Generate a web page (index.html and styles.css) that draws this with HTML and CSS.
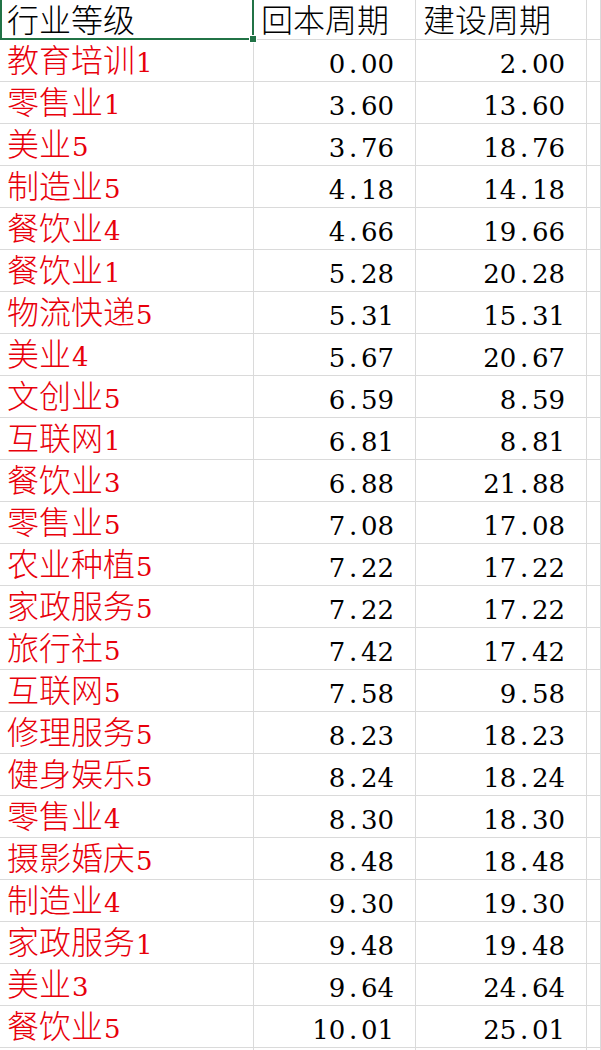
FILE: index.html
```html
<!DOCTYPE html>
<html>
<head>
<meta charset="utf-8">
<title>回本周期</title>
<link rel="stylesheet" href="styles.css">
</head>
<body>
<div class="sheet">
  <div class="row head">
    <div class="cell c1 selected">行业等级<span class="handle"></span></div>
    <div class="cell c2 txt">回本周期</div>
    <div class="cell c3 txt">建设周期</div>
    <div class="cell c4"></div>
  </div>
  <div class="row"><div class="cell c1 red">教育培训<span class="n">1</span></div><div class="cell c2 num">0<span class="dot">.</span>00</div><div class="cell c3 num">2<span class="dot">.</span>00</div><div class="cell c4"></div></div>
  <div class="row"><div class="cell c1 red">零售业<span class="n">1</span></div><div class="cell c2 num">3<span class="dot">.</span>60</div><div class="cell c3 num">13<span class="dot">.</span>60</div><div class="cell c4"></div></div>
  <div class="row"><div class="cell c1 red">美业<span class="n">5</span></div><div class="cell c2 num">3<span class="dot">.</span>76</div><div class="cell c3 num">18<span class="dot">.</span>76</div><div class="cell c4"></div></div>
  <div class="row"><div class="cell c1 red">制造业<span class="n">5</span></div><div class="cell c2 num">4<span class="dot">.</span>18</div><div class="cell c3 num">14<span class="dot">.</span>18</div><div class="cell c4"></div></div>
  <div class="row"><div class="cell c1 red">餐饮业<span class="n">4</span></div><div class="cell c2 num">4<span class="dot">.</span>66</div><div class="cell c3 num">19<span class="dot">.</span>66</div><div class="cell c4"></div></div>
  <div class="row"><div class="cell c1 red">餐饮业<span class="n">1</span></div><div class="cell c2 num">5<span class="dot">.</span>28</div><div class="cell c3 num">20<span class="dot">.</span>28</div><div class="cell c4"></div></div>
  <div class="row"><div class="cell c1 red">物流快递<span class="n">5</span></div><div class="cell c2 num">5<span class="dot">.</span>31</div><div class="cell c3 num">15<span class="dot">.</span>31</div><div class="cell c4"></div></div>
  <div class="row"><div class="cell c1 red">美业<span class="n">4</span></div><div class="cell c2 num">5<span class="dot">.</span>67</div><div class="cell c3 num">20<span class="dot">.</span>67</div><div class="cell c4"></div></div>
  <div class="row"><div class="cell c1 red">文创业<span class="n">5</span></div><div class="cell c2 num">6<span class="dot">.</span>59</div><div class="cell c3 num">8<span class="dot">.</span>59</div><div class="cell c4"></div></div>
  <div class="row"><div class="cell c1 red">互联网<span class="n">1</span></div><div class="cell c2 num">6<span class="dot">.</span>81</div><div class="cell c3 num">8<span class="dot">.</span>81</div><div class="cell c4"></div></div>
  <div class="row"><div class="cell c1 red">餐饮业<span class="n">3</span></div><div class="cell c2 num">6<span class="dot">.</span>88</div><div class="cell c3 num">21<span class="dot">.</span>88</div><div class="cell c4"></div></div>
  <div class="row"><div class="cell c1 red">零售业<span class="n">5</span></div><div class="cell c2 num">7<span class="dot">.</span>08</div><div class="cell c3 num">17<span class="dot">.</span>08</div><div class="cell c4"></div></div>
  <div class="row"><div class="cell c1 red">农业种植<span class="n">5</span></div><div class="cell c2 num">7<span class="dot">.</span>22</div><div class="cell c3 num">17<span class="dot">.</span>22</div><div class="cell c4"></div></div>
  <div class="row"><div class="cell c1 red">家政服务<span class="n">5</span></div><div class="cell c2 num">7<span class="dot">.</span>22</div><div class="cell c3 num">17<span class="dot">.</span>22</div><div class="cell c4"></div></div>
  <div class="row"><div class="cell c1 red">旅行社<span class="n">5</span></div><div class="cell c2 num">7<span class="dot">.</span>42</div><div class="cell c3 num">17<span class="dot">.</span>42</div><div class="cell c4"></div></div>
  <div class="row"><div class="cell c1 red">互联网<span class="n">5</span></div><div class="cell c2 num">7<span class="dot">.</span>58</div><div class="cell c3 num">9<span class="dot">.</span>58</div><div class="cell c4"></div></div>
  <div class="row"><div class="cell c1 red">修理服务<span class="n">5</span></div><div class="cell c2 num">8<span class="dot">.</span>23</div><div class="cell c3 num">18<span class="dot">.</span>23</div><div class="cell c4"></div></div>
  <div class="row"><div class="cell c1 red">健身娱乐<span class="n">5</span></div><div class="cell c2 num">8<span class="dot">.</span>24</div><div class="cell c3 num">18<span class="dot">.</span>24</div><div class="cell c4"></div></div>
  <div class="row"><div class="cell c1 red">零售业<span class="n">4</span></div><div class="cell c2 num">8<span class="dot">.</span>30</div><div class="cell c3 num">18<span class="dot">.</span>30</div><div class="cell c4"></div></div>
  <div class="row"><div class="cell c1 red">摄影婚庆<span class="n">5</span></div><div class="cell c2 num">8<span class="dot">.</span>48</div><div class="cell c3 num">18<span class="dot">.</span>48</div><div class="cell c4"></div></div>
  <div class="row"><div class="cell c1 red">制造业<span class="n">4</span></div><div class="cell c2 num">9<span class="dot">.</span>30</div><div class="cell c3 num">19<span class="dot">.</span>30</div><div class="cell c4"></div></div>
  <div class="row"><div class="cell c1 red">家政服务<span class="n">1</span></div><div class="cell c2 num">9<span class="dot">.</span>48</div><div class="cell c3 num">19<span class="dot">.</span>48</div><div class="cell c4"></div></div>
  <div class="row"><div class="cell c1 red">美业<span class="n">3</span></div><div class="cell c2 num">9<span class="dot">.</span>64</div><div class="cell c3 num">24<span class="dot">.</span>64</div><div class="cell c4"></div></div>
  <div class="row"><div class="cell c1 red">餐饮业<span class="n">5</span></div><div class="cell c2 num">10<span class="dot">.</span>01</div><div class="cell c3 num">25<span class="dot">.</span>01</div><div class="cell c4"></div></div>
  <div class="row"><div class="cell c1 red"></div><div class="cell c2 num"></div><div class="cell c3 num"></div><div class="cell c4"></div></div>
</div>
</body>
</html>
```
FILE: styles.css
```css
html, body {
  margin: 0;
  padding: 0;
  background: #ffffff;
}

body {
  font-family: "Noto Sans CJK SC", sans-serif;
  font-size: 32px;
  color: #000000;
  overflow: hidden;
}

.sheet {
  display: flex;
  flex-direction: column;
  width: 601px;
}

.row {
  display: grid;
  grid-template-columns: 254px 162px 171px 1fr;
  grid-template-rows: 42px;
  height: 42px;
  flex: none;
}

.row.head {
  grid-template-rows: 40px;
  height: 40px;
}

.cell {
  box-sizing: border-box;
  height: 100%;
  border-right: 1px solid #dadada;
  border-bottom: 1px solid #dadada;
  padding-top: 0;
  line-height: 36px;
  white-space: nowrap;
  font-weight: 300;
}

.head .cell {
  padding-top: 0;
}

.c1 {
  padding-left: 7px;
}

.txt {
  padding-left: 7px;
}

.num,
.n {
  font-family: "DejaVu Serif", serif;
  font-weight: 400;
  font-size: 26px;
}

.num {
  text-align: right;
  line-height: 30px;
  padding-top: 9px;
  padding-right: 21px;
}

.n {
  padding-left: 1px;
  line-height: 1;
}

.red {
  color: #e8000b;
}

.dot {
  display: inline-block;
  width: 0.6em;
  text-align: center;
}

.selected {
  position: relative;
  border-left: 2px solid #217346;
  border-right: 2px solid #217346;
  border-bottom: 2px solid #217346;
  padding-left: 5px;
}

.handle {
  position: absolute;
  right: -5px;
  bottom: -5px;
  width: 6px;
  height: 6px;
  background: #217346;
  border: 1px solid #ffffff;
  z-index: 2;
}
```
